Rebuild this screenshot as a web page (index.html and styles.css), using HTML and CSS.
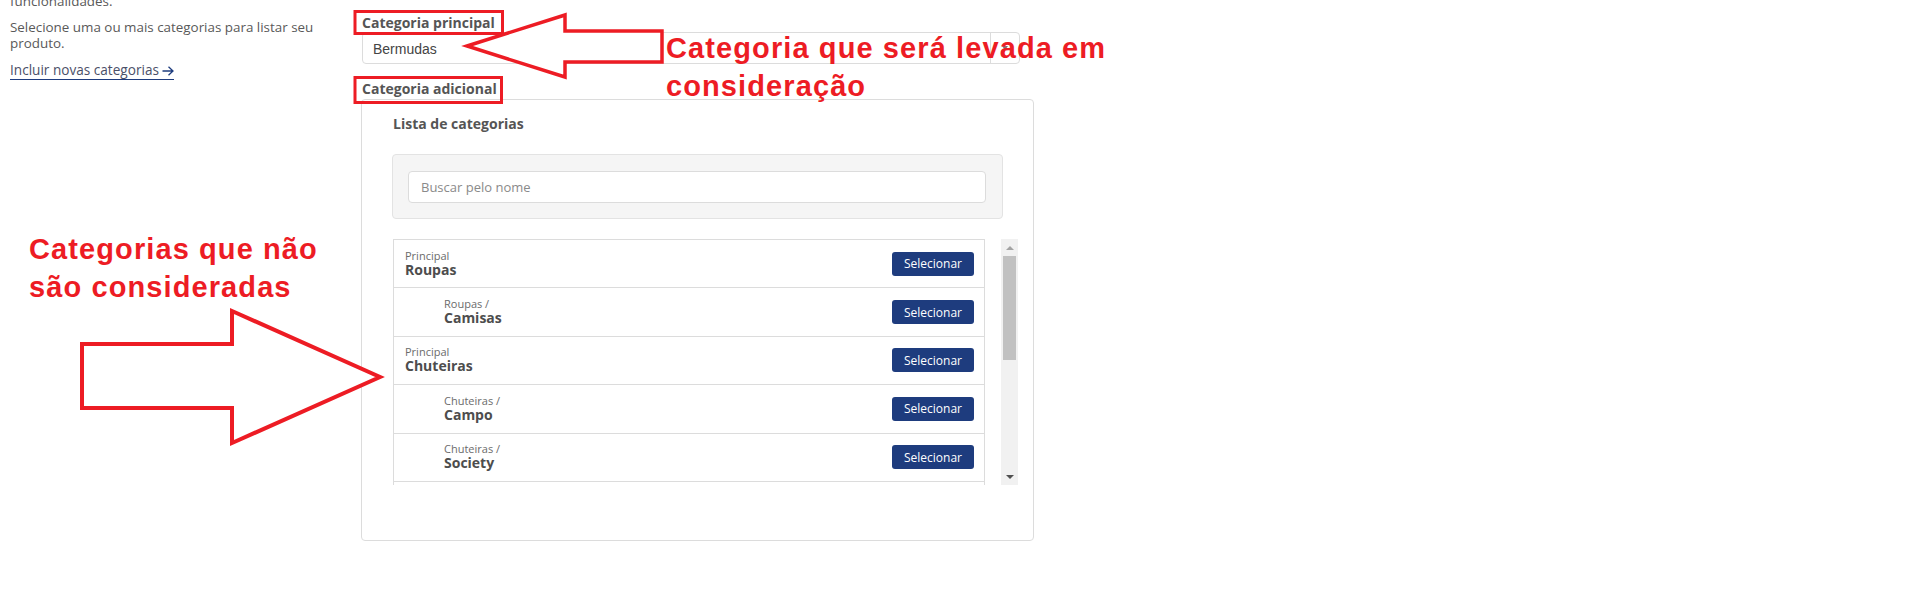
FILE: index.html
```html
<!DOCTYPE html>
<html>

<head>
    <meta charset="utf-8">
    <title>Categorias do produto</title>
    <link rel="stylesheet" href="styles.css">
</head>

<body>
    <div class="page">
        <aside class="sidebar">
            <p class="sidebar-text">funcionalidades.</p>
            <p class="sidebar-text">Selecione uma ou mais categorias para listar seu produto.</p>
            <a class="sidebar-link" href="#">Incluir novas categorias
                <svg class="link-arrow" width="12" height="10" viewBox="0 0 12 10">
                    <path d="M0.5 5H11M6.5 0.8L11 5L6.5 9.2" fill="none" stroke="#1e3c7e" stroke-width="1.3" />
                </svg>
            </a>
        </aside>

        <main class="content">
            <label class="field-label">Categoria principal</label>
            <div class="select">
                <span class="select-value">Bermudas</span>
                <span class="select-caret"><span class="caret"></span></span>
            </div>

            <label class="field-label label-extra">Categoria adicional</label>
            <div class="panel">
                <h3 class="panel-title">Lista de categorias</h3>

                <div class="search-well">
                    <input class="search-input" type="text" placeholder="Buscar pelo nome" />
                </div>

                <div class="list-wrap">
                    <ul class="cat-list">
                        <li class="cat-row">
                            <div class="cat-name">
                                <span class="cat-parent">Principal</span>
                                <span class="cat-title">Roupas</span>
                            </div>
                            <button class="btn-select">Selecionar</button>
                        </li>
                        <li class="cat-row child">
                            <div class="cat-name">
                                <span class="cat-parent">Roupas /</span>
                                <span class="cat-title">Camisas</span>
                            </div>
                            <button class="btn-select">Selecionar</button>
                        </li>
                        <li class="cat-row">
                            <div class="cat-name">
                                <span class="cat-parent">Principal</span>
                                <span class="cat-title">Chuteiras</span>
                            </div>
                            <button class="btn-select">Selecionar</button>
                        </li>
                        <li class="cat-row child">
                            <div class="cat-name">
                                <span class="cat-parent">Chuteiras /</span>
                                <span class="cat-title">Campo</span>
                            </div>
                            <button class="btn-select">Selecionar</button>
                        </li>
                        <li class="cat-row child">
                            <div class="cat-name">
                                <span class="cat-parent">Chuteiras /</span>
                                <span class="cat-title">Society</span>
                            </div>
                            <button class="btn-select">Selecionar</button>
                        </li>
                        <li class="cat-row child"></li>
                    </ul>

                    <div class="scrollbar">
                        <div class="sb-button"><span class="sb-up"></span></div>
                        <div class="sb-track"><div class="sb-thumb"></div></div>
                        <div class="sb-button"><span class="sb-down"></span></div>
                    </div>
                </div>
            </div>
        </main>
    </div>

    <!-- annotations drawn over the screenshot -->
    <svg class="marks" width="1913" height="600" viewBox="0 0 1913 600">
        <rect x="355" y="11.5" width="147.5" height="22" fill="none" stroke="#ed1c24" stroke-width="3" />
        <rect x="355" y="77.5" width="146.5" height="25" fill="none" stroke="#ed1c24" stroke-width="3" />
        <polygon points="467,46 565,15 565,31 662,31 662,62 565,62 565,77" fill="#fff" stroke="#ed1c24" stroke-width="3.5" stroke-linejoin="miter" />
        <polygon points="82,344 232,344 232,311 380,377 232,443 232,408 82,408" fill="#fff" stroke="#ed1c24" stroke-width="4" stroke-linejoin="miter" />
    </svg>
    <div class="note note-top">Categoria que será levada em<br>consideração</div>
    <div class="note note-left">Categorias que não<br>são consideradas</div>
</body>

</html>
```

FILE: styles.css
```css
body {
    margin: 0;
    font-family: "Open Sans", "Liberation Sans", sans-serif;
    color: #555;
    background-color: #fff;
}

.page {
    display: flex;
    align-items: flex-start;
}

/* left column */
.sidebar {
    flex: 0 0 351px;
    box-sizing: border-box;
    padding-left: 10px;
    padding-right: 10px;
    margin-top: -7px;
}

.sidebar-text {
    margin: 0 0 10px;
    font-size: 13.4px;
    line-height: 16px;
    color: #595959;
}

.sidebar-text + .sidebar-text {
    margin-bottom: 7px;
}

.sidebar-link {
    display: inline-block;
    font-size: 13.6px;
    line-height: 16px;
    color: #4b5068;
    text-decoration: none;
    padding-bottom: 1px;
    border-bottom: 1px solid #1e3c7e;
}

.link-arrow {
    vertical-align: -1px;
}

/* main column */
.content {
    width: 673px;
    margin-left: 10px;
}

.field-label {
    display: block;
    padding-left: 1px;
    margin-top: 14px;
    font-size: 14px;
    line-height: 18px;
    font-weight: 700;
    color: #555;
}

.label-extra {
    margin-top: 16px;
    margin-bottom: 1px;
}

.select {
    display: flex;
    width: 658px;
    height: 32px;
    margin-left: 1px;
    box-sizing: border-box;
    border: 1px solid #dcdcdc;
    border-radius: 4px;
}

.select-value {
    flex: 1;
    padding: 3px 0 0 10px;
    font-family: "Liberation Sans", Arial, sans-serif;
    font-size: 14px;
    line-height: 27px;
    color: #444;
}

.select-caret {
    display: flex;
    align-items: center;
    justify-content: center;
    width: 28px;
    border-left: 1px solid #dcdcdc;
}

.caret {
    border-left: 3px solid transparent;
    border-right: 3px solid transparent;
    border-top: 4px solid #777;
}

.panel {
    box-sizing: border-box;
    width: 673px;
    padding: 14px 15px 55px 31px;
    border: 1px solid #dcdcdc;
    border-radius: 4px;
}

.panel-title {
    margin: 0 0 20px;
    font-size: 14px;
    line-height: 20px;
    font-weight: 700;
    color: #555;
}

.search-well {
    width: 611px;
    margin-left: -1px;
    box-sizing: border-box;
    padding: 16px 16px 15px 15px;
    background-color: #f5f5f5;
    border: 1px solid #e3e3e3;
    border-radius: 4px;
}

.search-input {
    display: block;
    width: 100%;
    height: 32px;
    box-sizing: border-box;
    padding: 0 12px;
    border: 1px solid #dcdcdc;
    border-radius: 4px;
    background-color: #fff;
    font-family: "Open Sans", sans-serif;
    font-size: 13px;
    color: #555;
}

.search-input::placeholder {
    color: #8a8a8a;
}

.list-wrap {
    display: flex;
    margin-top: 20px;
    height: 246px;
}

.cat-list {
    list-style: none;
    margin: 0 16px 0 0;
    padding: 0;
    width: 592px;
    height: 246px;
    overflow: hidden;
}

.cat-row {
    display: flex;
    align-items: center;
    justify-content: space-between;
    box-sizing: border-box;
    height: 48.4px;
    padding: 0 10px 0 11px;
    border: 1px solid #dcdcdc;
    border-bottom: none;
}

.cat-row.child {
    padding-left: 50px;
}

.cat-name {
    display: flex;
    flex-direction: column;
}

.cat-parent {
    font-size: 11px;
    line-height: 12px;
    color: #6b6b6b;
}

.cat-title {
    font-size: 14px;
    line-height: 16px;
    font-weight: 700;
    color: #4d4d4d;
}

.btn-select {
    height: 24px;
    padding: 0 12px;
    border: none;
    border-radius: 3px;
    background-color: #1e3c7e;
    color: #fff;
    font-family: "Open Sans", sans-serif;
    font-size: 12px;
}

/* fake scrollbar of the list */
.scrollbar {
    display: flex;
    flex-direction: column;
    width: 17px;
    background-color: #f1f1f1;
}

.sb-button {
    display: flex;
    align-items: center;
    justify-content: center;
    height: 17px;
}

.sb-up {
    border-left: 4px solid transparent;
    border-right: 4px solid transparent;
    border-bottom: 4px solid #a3a3a3;
}

.sb-down {
    border-left: 4px solid transparent;
    border-right: 4px solid transparent;
    border-top: 4px solid #505050;
}

.sb-track {
    flex: 1;
    padding: 0 2px;
}

.sb-thumb {
    height: 104px;
    background-color: #c1c1c1;
}

/* red annotations */
.marks {
    position: absolute;
    top: 0;
    left: 0;
}

.note {
    position: absolute;
    font-family: "Liberation Sans", Arial, sans-serif;
    font-weight: 700;
    font-size: 29px;
    line-height: 38px;
    letter-spacing: 1.1px;
    color: #ed1c24;
    white-space: nowrap;
}

.note-top {
    top: 29px;
    left: 666px;
}

.note-left {
    top: 230px;
    left: 29px;
}
```
